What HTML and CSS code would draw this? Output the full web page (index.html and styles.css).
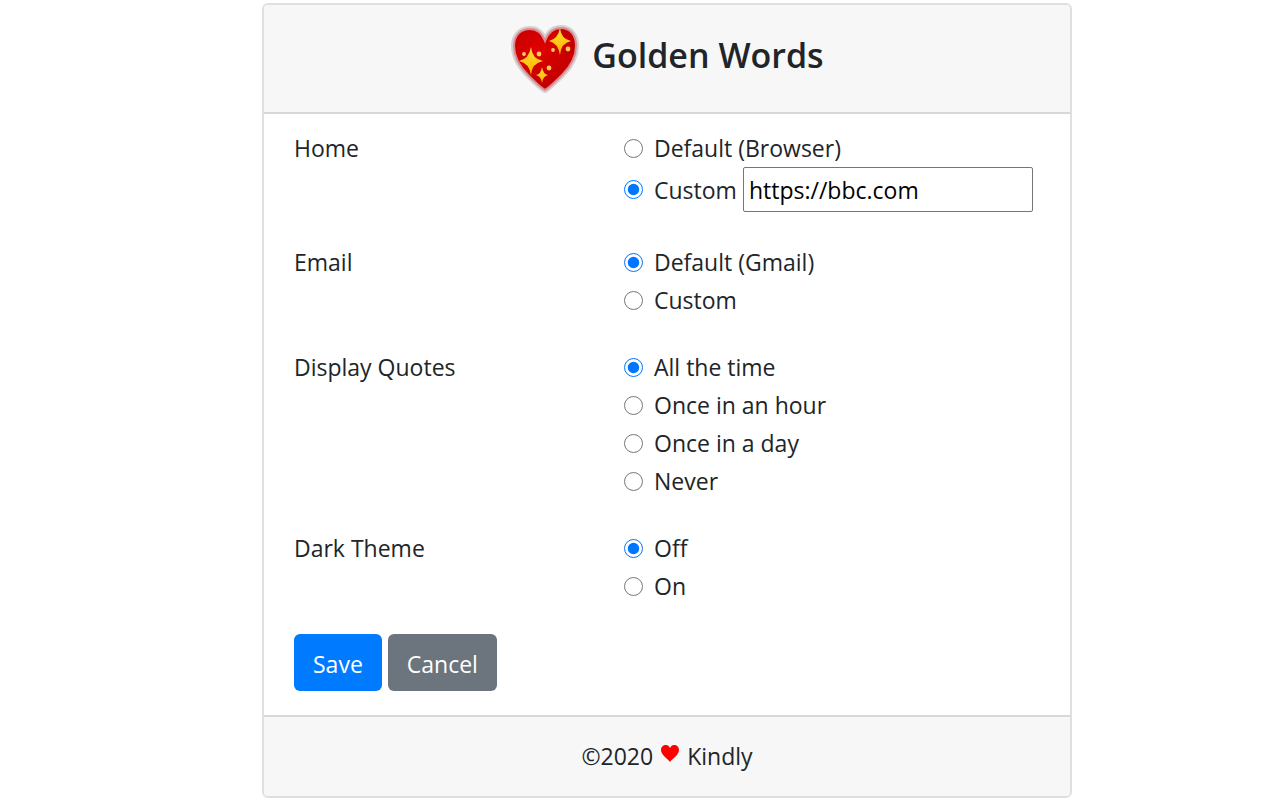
FILE: index.html
```html
<!DOCTYPE html>
<html lang="en">
<head>
    <meta charset="UTF-8">
    <meta name="viewport" content="width=device-width, initial-scale=1.0">
    <title>Golden Words</title>
    <link rel="stylesheet" href="styles.css">
</head>
<body>
    <form class="card">
        <header class="card-header">
            <svg class="logo" viewBox="0 0 70 70" aria-hidden="true">
                <defs>
                    <radialGradient id="red" cx="40%" cy="35%" r="70%">
                        <stop offset="0" stop-color="#e00000"/>
                        <stop offset="1" stop-color="#bc0000"/>
                    </radialGradient>
                    <linearGradient id="gold" x1="0" y1="0" x2="0" y2="1">
                        <stop offset="0" stop-color="#ffe030"/>
                        <stop offset="1" stop-color="#ffb000"/>
                    </linearGradient>
                    <path id="heart" d="M35 66C31 64 26 59 19 52C10 43 4 34 4 22C4 11 11 5 20 5C27 5 32 9 35 17C38 9 43 4 51 4C60 4 66 11 66 22C66 33 61 42 52 51C45 58 39 64 35 66Z"/>
                </defs>
                <use href="#heart" fill="none" stroke="#c0b8b8" stroke-width="6" stroke-linejoin="round" opacity=".6"/>
                <use href="#heart" fill="url(#red)" stroke="#dc8a90" stroke-width="2"/>
                <g fill="url(#gold)">
                    <path d="M50 4Q51 15 61 17Q51 19 50 31Q48 19 39 17Q48 15 50 4Z"/>
                    <path d="M21 23Q22 35 33 37Q22 39 21 51Q19 39 9 37Q19 35 21 23Z"/>
                    <path d="M32 43Q33 50 38 51Q33 52 32 59Q31 52 26 51Q31 50 32 43Z"/>
                </g>
                <g fill="#ffc860">
                    <circle cx="29" cy="30" r="2.4"/>
                    <circle cx="14" cy="30" r="1.9"/>
                    <circle cx="43" cy="26" r="1.9"/>
                    <circle cx="58" cy="25" r="2.4"/>
                    <circle cx="39" cy="44" r="2.4"/>
                </g>
            </svg>
            <h1>Golden Words</h1>
        </header>

        <div class="card-body">
            <div class="setting" role="radiogroup" aria-labelledby="homeLabel">
                <div id="homeLabel">Home</div>
                <div>
                    <div class="option">
                        <input type="radio" name="home" id="homeDefault">
                        <label for="homeDefault">Default (Browser)</label>
                    </div>
                    <div class="option option-url">
                        <input type="radio" name="home" id="homeCustom" checked>
                        <label for="homeCustom">Custom</label>
                        <input type="text" class="url" value="https://bbc.com" aria-label="Custom home page">
                    </div>
                </div>
            </div>

            <div class="setting" role="radiogroup" aria-labelledby="emailLabel">
                <div id="emailLabel">Email</div>
                <div>
                    <div class="option">
                        <input type="radio" name="email" id="emailDefault" checked>
                        <label for="emailDefault">Default (Gmail)</label>
                    </div>
                    <div class="option">
                        <input type="radio" name="email" id="emailCustom">
                        <label for="emailCustom">Custom</label>
                    </div>
                </div>
            </div>

            <div class="setting" role="radiogroup" aria-labelledby="quotesLabel">
                <div id="quotesLabel">Display Quotes</div>
                <div>
                    <div class="option">
                        <input type="radio" name="quotes" id="quotesAlways" checked>
                        <label for="quotesAlways">All the time</label>
                    </div>
                    <div class="option">
                        <input type="radio" name="quotes" id="quotesHour">
                        <label for="quotesHour">Once in an hour</label>
                    </div>
                    <div class="option">
                        <input type="radio" name="quotes" id="quotesDay">
                        <label for="quotesDay">Once in a day</label>
                    </div>
                    <div class="option">
                        <input type="radio" name="quotes" id="quotesNever">
                        <label for="quotesNever">Never</label>
                    </div>
                </div>
            </div>

            <div class="setting" role="radiogroup" aria-labelledby="themeLabel">
                <div id="themeLabel">Dark Theme</div>
                <div>
                    <div class="option">
                        <input type="radio" name="theme" id="themeOff" checked>
                        <label for="themeOff">Off</label>
                    </div>
                    <div class="option">
                        <input type="radio" name="theme" id="themeOn">
                        <label for="themeOn">On</label>
                    </div>
                </div>
            </div>

            <div class="buttons">
                <button type="button" class="btn btn-primary">Save</button>
                <button type="button" class="btn btn-secondary">Cancel</button>
            </div>
        </div>

        <footer class="card-footer">
            <span>©2020</span>
            <svg class="love" viewBox="0 0 18 18" aria-hidden="true">
                <path fill="#f00" d="M9 17C7 14 0 10 0 5C0 2 2 0 5 0C7 0 8 1 9 3C10 1 11 0 13 0C16 0 18 2 18 5C18 10 11 14 9 17Z"/>
            </svg>
            <span>Kindly</span>
        </footer>
    </form>
</body>
</html>
```

FILE: styles.css
```css
* {
    box-sizing: border-box;
}
body {
    margin: 0;
    padding: 3px 0 2px 54px;
    background-color: #fff;
    color: #212529;
    font-family: "Open Sans", "Noto Sans", sans-serif;
    font-size: 23px;
    line-height: 38px;
}
.card {
    max-width: 810px;
    margin: 0 auto;
    border: 2px solid #dfdfdf;
    border-radius: 6px;
}
.card-header,
.card-footer {
    display: flex;
    justify-content: center;
    background-color: #f7f7f7;
}
.card-header {
    gap: 12px;
    padding: 19px 30px 18px;
    border-bottom: 2px solid #d8d8d8;
    border-radius: 4px 4px 0 0;
}
.card-header h1 {
    margin: 8px 0 0;
    font-size: 34px;
    font-weight: 600;
    line-height: 46px;
}
.logo {
    width: 70px;
    height: 70px;
}
.card-body {
    padding: 15px 30px 24px;
}
.setting {
    display: grid;
    grid-template-columns: 330px 1fr;
    margin-bottom: 29px;
}
.option {
    display: flex;
    align-items: center;
}
.option input[type="radio"] {
    width: 19px;
    height: 19px;
    margin: 0 11px 0 0;
}
.option-url {
    margin-bottom: 2px;
}
.url {
    width: 290px;
    height: 45px;
    margin-left: 6px;
    padding: 0 5px;
    border: 1px solid #767676;
    border-radius: 2px;
    background-color: #fff;
    color: #000;
    font: inherit;
}
.buttons {
    display: flex;
    gap: 6px;
}
.btn {
    height: 57px;
    padding: 2px 19px 0;
    border: 0;
    border-radius: 6px;
    color: #fff;
    font: inherit;
}
.btn-primary {
    background-color: #007bff;
}
.btn-secondary {
    background-color: #6c757d;
}
.card-footer {
    gap: 8px;
    padding: 20px 30px 21px;
    border-top: 2px solid #d8d8d8;
    border-radius: 0 0 4px 4px;
}
.love {
    width: 18px;
    height: 18px;
    margin-top: 8px;
}
```
